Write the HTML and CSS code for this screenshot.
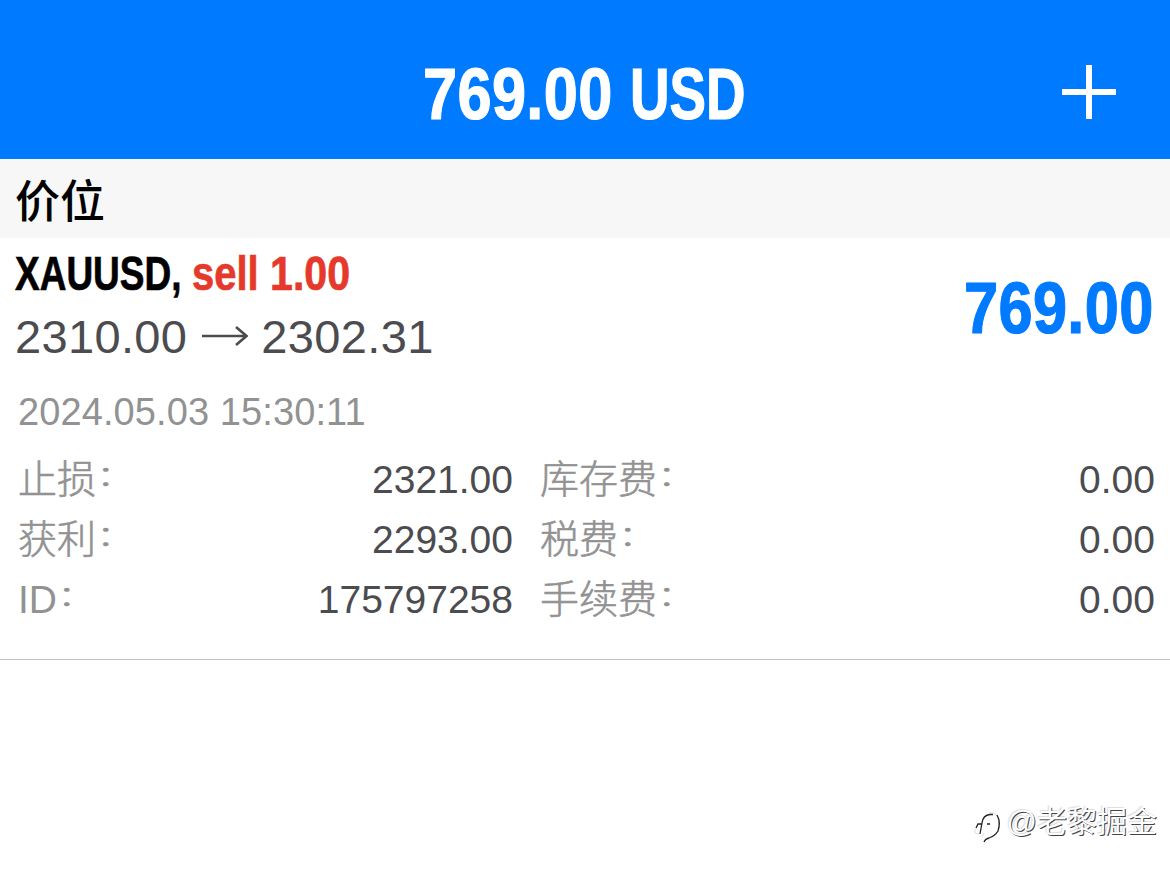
FILE: index.html
```
<!DOCTYPE html>
<html lang="zh-CN">
<head>
  <meta charset="UTF-8" />
  <meta name="viewport" content="width=device-width, initial-scale=1.0" />
  <title>769.00 USD</title>
  <link rel="stylesheet" href="styles.css">
</head>
<body>
  <header class="topbar">
    <h1 class="balance">
      <span class="balance-value"><span class="squeeze">769.00</span></span>
      <span class="balance-currency"><span class="squeeze">USD</span></span>
    </h1>
    <svg class="add" width="54" height="54" viewBox="0 0 54 54">
      <path d="M27 0V54M0 27H54" stroke="#fff" stroke-width="6" />
    </svg>
  </header>

  <h2 class="section-title">价位</h2>

  <main class="position">
    <div class="summary">
      <div class="deal">
        <div class="symbol">
          <span class="symbol-name"><span class="squeeze">XAUUSD,</span></span>
          <span class="symbol-side"><span class="squeeze">sell</span></span>
          <span class="symbol-volume"><span class="squeeze">1.00</span></span>
        </div>
        <div class="prices">
          <span class="price">2310.00</span>
          <svg class="arrow" width="46" height="20" viewBox="0 0 46 20">
            <path d="M0 10H44M34 1L44.500 10L34 19" fill="none" stroke="#4b4b50" stroke-width="2.600" />
          </svg>
          <span class="price">2302.31</span>
        </div>
      </div>
      <div class="profit"><span class="squeeze">769.00</span></div>
    </div>

    <div class="time">2024.05.03 15:30:11</div>

    <div class="details">
      <dl class="column column-left">
        <div class="row"><dt>止损<i>：</i></dt><dd>2321.00</dd></div>
        <div class="row"><dt>获利<i>：</i></dt><dd>2293.00</dd></div>
        <div class="row"><dt><b>ID</b><i>：</i></dt><dd>175797258</dd></div>
      </dl>
      <dl class="column column-right">
        <div class="row"><dt>库存费<i>：</i></dt><dd>0.00</dd></div>
        <div class="row"><dt>税费<i>：</i></dt><dd>0.00</dd></div>
        <div class="row"><dt>手续费<i>：</i></dt><dd>0.00</dd></div>
      </dl>
    </div>
  </main>

  <footer class="watermark">
    <svg width="32" height="40" viewBox="0 0 32 40" fill="none">
      <path d="M2 25V29L6 30M16 9Q25 7 26 19M9 33L11 29" stroke="#ddd" stroke-width="1" />
      <path d="M3 24L5 20H9M7 30L9 19Q10 11 17 10.500H20M14 20H17" stroke="#222" stroke-width="1.300" />
      <path d="M24 11Q28 18 25 27Q22 32 16 34Q12 35 11 38" stroke="#222" stroke-width="1.300" />
    </svg>
    <span>@老黎掘金</span>
  </footer>
</body>
</html>
```
FILE: styles.css
```
* {
  box-sizing: border-box;
  margin: 0;
  padding: 0;
}

body {
  width: 1170px;
  height: 874px;
  display: flex;
  flex-direction: column;
  background: #fff;
  font-family: "Liberation Sans", "Noto Sans CJK SC", sans-serif;
  overflow: hidden;
}

/* condensed bold lettering */
.squeeze {
  display: inline-block;
  transform: scaleX(0.84);
  transform-origin: left center;
  white-space: nowrap;
  -webkit-text-stroke: 1.2px currentColor;
}

.topbar {
  display: grid;
  grid-template-columns: 1fr 324px 1fr;
  height: 159px;
  padding-top: 54px;
  background: #007aff;
  color: #fff;
}

.balance {
  grid-column: 2;
  display: flex;
  gap: 17px;
  font-size: 73px;
  line-height: 79px;
}

.balance-value,
.profit {
  letter-spacing: 0.4px;
}

.balance-value {
  width: 190px;
}

.balance-currency {
  width: 116px;
}

.balance-currency .squeeze {
  transform: scaleX(0.75);
}

.add {
  justify-self: end;
  margin: 11px 54px 0 0;
}

.section-title {
  height: 79px;
  padding-left: 15px;
  background: #f7f7f7;
  font-size: 45px;
  font-weight: 500;
  line-height: 87px;
}

.position {
  height: 422px;
  padding: 8px 15px 0;
  border-bottom: 1px solid #c2c2c4;
}

.summary {
  display: flex;
  justify-content: space-between;
}

.symbol {
  display: flex;
  height: 56px;
  font-size: 49px;
  font-weight: bold;
  line-height: 55px;
}

.symbol .squeeze {
  -webkit-text-stroke-width: 0.7px;
}

.symbol-name {
  width: 177px;
}

.symbol-name .squeeze {
  transform: scaleX(0.755);
}

.symbol-side {
  width: 78px;
  color: #e53a2b;
}

.symbol-side .squeeze {
  transform: scaleX(0.815);
}

.symbol-volume {
  color: #e53a2b;
}

.prices {
  display: flex;
  align-items: center;
  height: 68px;
  font-size: 47px;
  letter-spacing: 0.35px;
  color: #4b4b50;
}

.arrow {
  margin: 0 13px 0 15px;
}

.profit {
  width: 191px;
  height: 80px;
  margin-top: 22px;
  font-size: 73px;
  font-weight: bold;
  line-height: 80px;
  color: #007aff;
}

.time {
  margin-top: 18px;
  padding-left: 3px;
  font-size: 38px;
  line-height: 49px;
  letter-spacing: 0.1px;
  color: #929292;
}

.details {
  display: flex;
  gap: 27px;
  margin-top: 13px;
}

.column-left {
  width: 498px;
  padding-left: 3px;
}

.column-right {
  flex: 1;
}

.row {
  display: flex;
  justify-content: space-between;
  height: 60px;
  font-size: 39px;
  line-height: 60px;
}

.row dt {
  font-weight: 300;
  color: #929292;
  -webkit-text-stroke: 0.6px #929292;
}

.row dt b {
  font-weight: normal;
  -webkit-text-stroke: 0;
}

/* pull the full-width colon up to the middle of the line */
.row i {
  display: inline-block;
  font-style: normal;
  line-height: 1;
  transform: translateY(-3px) scaleY(0.72);
}

.row dd {
  color: #4b4b50;
}

.watermark {
  display: flex;
  align-items: center;
  justify-content: flex-end;
  height: 44px;
  margin-top: 142px;
  padding-right: 13px;
  gap: 2px;
  font-size: 30px;
  color: #fff;
  text-shadow: 1px 1px 0 #444, -1px -1px 1px #ddd;
}

.watermark span {
  line-height: 38px;
  padding-bottom: 5px;
}
```
